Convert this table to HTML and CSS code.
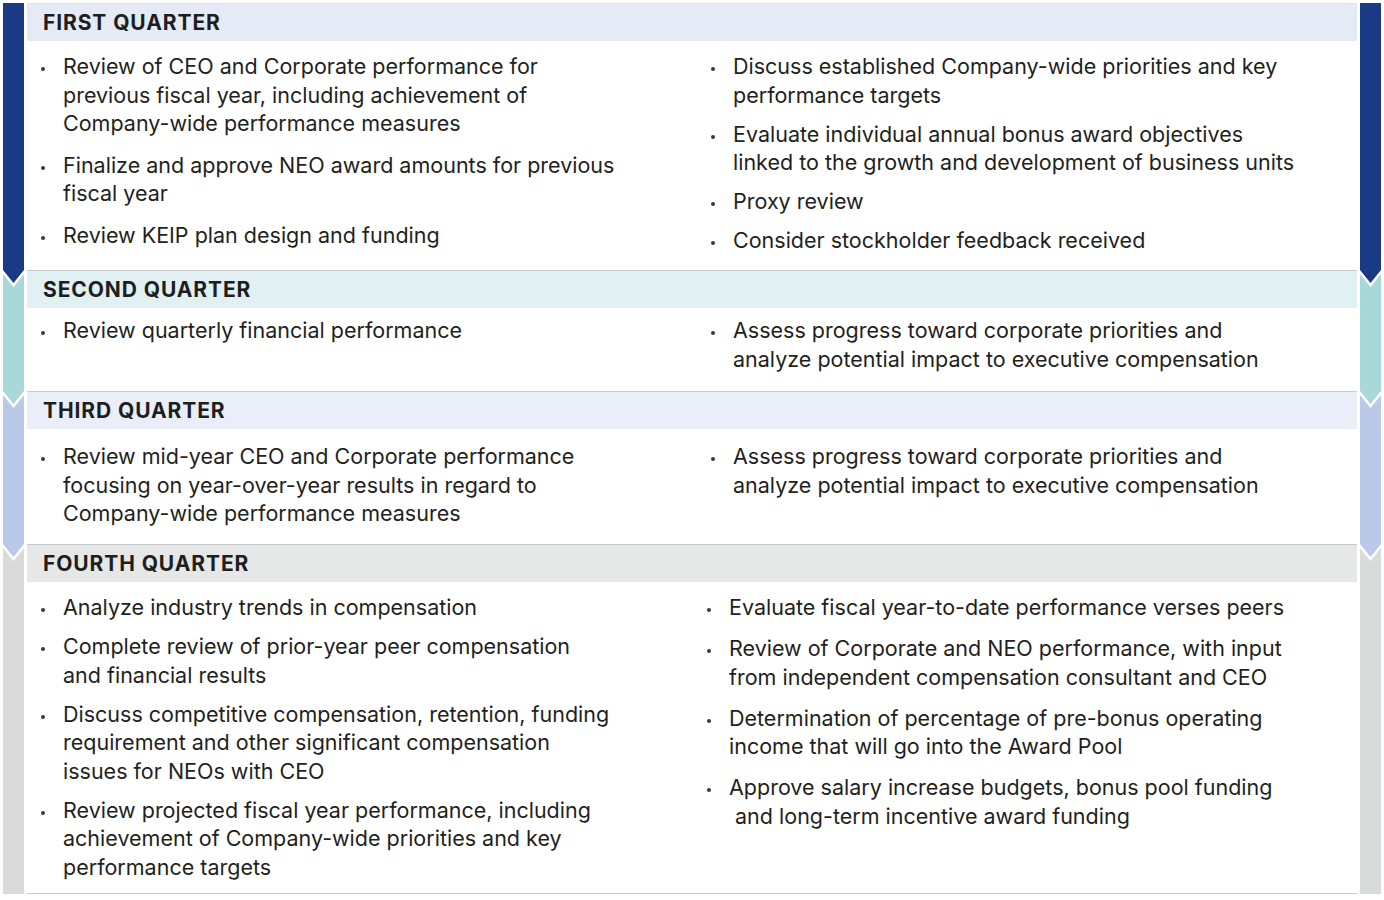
FILE: index.html
```html
<!DOCTYPE html>
<html lang="en">
<head>
<meta charset="utf-8">
<title>Quarterly Compensation Calendar</title>
<link rel="stylesheet" href="styles.css">
</head>
<body>
<main class="calendar">
  <section class="q q1">
    <div class="rail rail-first"></div>
    <div class="main">
      <h2 class="qhead">FIRST QUARTER</h2>
      <div class="cols">
        <ul class="list list-wide">
          <li><span>Review of CEO and Corporate performance for<br>previous fiscal year, including achievement of<br>Company-wide performance measures</span></li>
          <li><span>Finalize and approve NEO award amounts for previous<br>fiscal year</span></li>
          <li><span>Review KEIP plan design and funding</span></li>
        </ul>
        <ul class="list">
          <li><span>Discuss established Company-wide priorities and key<br>performance targets</span></li>
          <li><span>Evaluate individual annual bonus award objectives<br>linked to the growth and development of business units</span></li>
          <li><span>Proxy review</span></li>
          <li><span>Consider stockholder feedback received</span></li>
        </ul>
      </div>
    </div>
    <div class="rail rail-first"></div>
  </section>

  <section class="q q2">
    <div class="rail rail-mid"></div>
    <div class="main">
      <h2 class="qhead">SECOND QUARTER</h2>
      <div class="cols">
        <ul class="list">
          <li><span>Review quarterly financial performance</span></li>
        </ul>
        <ul class="list">
          <li><span>Assess progress toward corporate priorities and<br>analyze potential impact to executive compensation</span></li>
        </ul>
      </div>
    </div>
    <div class="rail rail-mid"></div>
  </section>

  <section class="q q3">
    <div class="rail rail-mid"></div>
    <div class="main">
      <h2 class="qhead">THIRD QUARTER</h2>
      <div class="cols">
        <ul class="list">
          <li><span>Review mid-year CEO and Corporate performance<br>focusing on year-over-year results in regard to<br>Company-wide performance measures</span></li>
        </ul>
        <ul class="list">
          <li><span>Assess progress toward corporate priorities and<br>analyze potential impact to executive compensation</span></li>
        </ul>
      </div>
    </div>
    <div class="rail rail-mid"></div>
  </section>

  <section class="q q4">
    <div class="rail rail-last"></div>
    <div class="main">
      <h2 class="qhead">FOURTH QUARTER</h2>
      <div class="cols">
        <ul class="list">
          <li><span>Analyze industry trends in compensation</span></li>
          <li><span>Complete review of prior-year peer compensation<br>and financial results</span></li>
          <li><span>Discuss competitive compensation, retention, funding<br>requirement and other significant compensation<br>issues for NEOs with CEO</span></li>
          <li><span>Review projected fiscal year performance, including<br>achievement of Company-wide priorities and key<br>performance targets</span></li>
        </ul>
        <ul class="list list-shift list-loose">
          <li><span>Evaluate fiscal year-to-date performance verses peers</span></li>
          <li><span>Review of Corporate and NEO performance, with input<br>from independent compensation consultant and CEO</span></li>
          <li><span>Determination of percentage of pre-bonus operating<br>income that will go into the Award Pool</span></li>
          <li><span>Approve salary increase budgets, bonus pool funding<br>&nbsp;and long-term incentive award funding</span></li>
        </ul>
      </div>
    </div>
    <div class="rail rail-last"></div>
  </section>
</main>
</body>
</html>
```

FILE: styles.css
```css
* { box-sizing: border-box; }

html, body {
  margin: 0;
  padding: 0;
  background: #ffffff;
}

body {
  padding: 3px 3px 0 3px;
  font-family: "Inter", "Liberation Sans", sans-serif;
  color: #231f20;
}

.calendar {
  display: flex;
  flex-direction: column;
}

.q {
  display: grid;
  grid-template-columns: 21px 1fr 21px;
  column-gap: 3px;
}

/* side rails */
.rail {
  align-self: stretch;
}

.rail-first {
  margin-bottom: -13px;
  clip-path: polygon(0 0, 100% 0, 100% calc(100% - 13px), 50% 100%, 0 calc(100% - 13px));
}

.rail-mid {
  margin-bottom: -13px;
  clip-path: polygon(0 4px, 50% 17px, 100% 4px, 100% calc(100% - 13px), 50% 100%, 0 calc(100% - 13px));
}

.rail-last {
  clip-path: polygon(0 4px, 50% 17px, 100% 4px, 100% 100%, 0 100%);
}

.q1 .rail { background: #1b3a85; }
.q2 .rail { background: #a8d8d9; }
.q3 .rail { background: #b9c9e7; }
.q4 .rail { background: #d9dbdb; }

.main {
  display: flex;
  flex-direction: column;
}

.qhead {
  margin: 0;
  height: 38px;
  border-top: 1px solid #c9cacc;
  display: flex;
  align-items: center;
  padding: 0 0 0 16px;
  font-size: 21px;
  font-weight: 700;
  letter-spacing: 0.9px;
  color: #1e1e1e;
}

.q1 .qhead { background: #e4ebf6; border-top-color: #dfe3ea; }
.q2 .qhead { background: #e1f1f3; }
.q3 .qhead { background: #e9eef8; }
.q4 .qhead { background: #e6e7e7; }

.cols {
  display: grid;
  grid-template-columns: 670px 1fr;
}

.q1 .cols { height: 229px; padding-top: 11px; }
.q2 .cols { height: 83px; padding-top: 8px; }
.q3 .cols { height: 115px; padding-top: 13px; }
.q4 .cols { height: 312px; padding-top: 11px; border-bottom: 1px solid #c9cacc; }

.list {
  list-style: none;
  margin: 0;
  padding: 0 0 0 14px;
  display: flex;
  flex-direction: column;
  gap: 10.5px;
  font-size: 21.5px;
  line-height: 28.5px;
}

.list-wide { gap: 13px; }
.list-loose { gap: 12.5px; }
.list-shift { margin-left: -4px; }

.list li {
  display: grid;
  grid-template-columns: 22px 1fr;
  align-items: start;
}

.list li::before {
  content: "";
  width: 4px;
  height: 4px;
  border-radius: 50%;
  background: #3a3a3a;
  margin-top: 15px;
}

.list-shift li { grid-template-columns: 22px 1fr; }

.list li span {
  white-space: nowrap;
}
```
